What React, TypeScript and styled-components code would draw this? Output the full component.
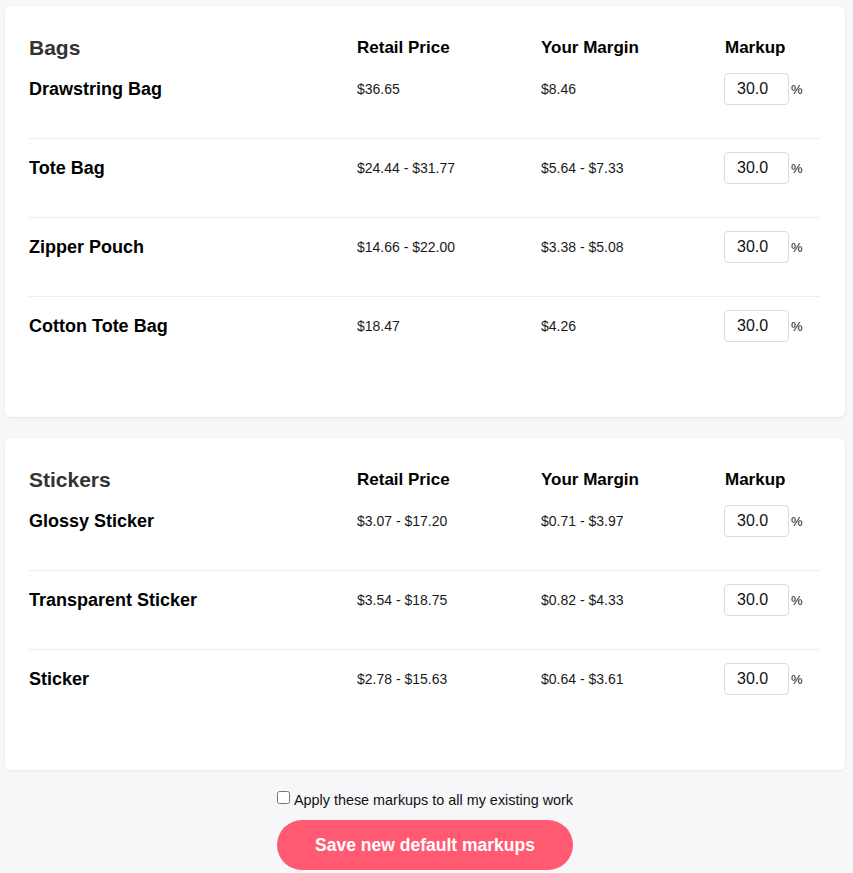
import React from 'react'
import styled, { createGlobalStyle } from 'styled-components'

type Product = {
  name: string
  retail: string
  margin: string
  markup: string
}

type Category = {
  title: string
  products: Product[]
}

const categories: Category[] = [
  {
    title: 'Bags',
    products: [
      { name: 'Drawstring Bag', retail: '$36.65', margin: '$8.46', markup: '30.0' },
      { name: 'Tote Bag', retail: '$24.44 - $31.77', margin: '$5.64 - $7.33', markup: '30.0' },
      { name: 'Zipper Pouch', retail: '$14.66 - $22.00', margin: '$3.38 - $5.08', markup: '30.0' },
      { name: 'Cotton Tote Bag', retail: '$18.47', margin: '$4.26', markup: '30.0' },
    ],
  },
  {
    title: 'Stickers',
    products: [
      { name: 'Glossy Sticker', retail: '$3.07 - $17.20', margin: '$0.71 - $3.97', markup: '30.0' },
      { name: 'Transparent Sticker', retail: '$3.54 - $18.75', margin: '$0.82 - $4.33', markup: '30.0' },
      { name: 'Sticker', retail: '$2.78 - $15.63', margin: '$0.64 - $3.61', markup: '30.0' },
    ],
  },
]

const GlobalStyle = createGlobalStyle`
  html, body {
    margin: 0;
    padding: 0;
    background: #f7f7f9;
    font-family: "Liberation Sans", Arial, sans-serif;
    color: #111;
  }
`

const App = () => {
  const [applyAll, setApplyAll] = React.useState(false)

  return (
    <>
      <GlobalStyle />
      <Page>
        {categories.map((category) => (
          <CategoryCard key={category.title} category={category} />
        ))}
        <Footer>
          <CheckboxLabel>
            <Checkbox
              type="checkbox"
              checked={applyAll}
              onChange={(e) => setApplyAll(e.target.checked)}
            />
            Apply these markups to all my existing work
          </CheckboxLabel>
          <SaveButton type="button">Save new default markups</SaveButton>
        </Footer>
      </Page>
    </>
  )
}

const CategoryCard = ({ category }: { category: Category }) => (
  <Card>
    <HeaderRow>
      <Title>{category.title}</Title>
      <ColumnHeading>Retail Price</ColumnHeading>
      <ColumnHeading>Your Margin</ColumnHeading>
      <ColumnHeading>Markup</ColumnHeading>
    </HeaderRow>
    {category.products.map((product) => (
      <ProductRow key={product.name}>
        <ProductName>{product.name}</ProductName>
        <Value>{product.retail}</Value>
        <Value>{product.margin}</Value>
        <MarkupCell>
          <MarkupInput defaultValue={product.markup} />
          <Percent>%</Percent>
        </MarkupCell>
      </ProductRow>
    ))}
  </Card>
)

const Page = styled.div`
  display: flex;
  flex-direction: column;
  gap: 21px;
  padding: 6px 8px 3px 5px;
`

const Card = styled.section`
  padding: 30px 25px 42px 24px;
  background: #fff;
  border-radius: 6px;
  box-shadow: 0 1px 3px rgba(0, 0, 0, 0.07);
`

const rowGrid = `
  display: grid;
  grid-template-columns: 328px 184px 184px 1fr;
  align-items: center;
`

const HeaderRow = styled.div`
  ${rowGrid}
  height: 24px;
`

const Title = styled.h2`
  margin: 0;
  font-size: 21px;
  font-weight: 700;
  line-height: 24px;
  color: #333;
`

const ColumnHeading = styled.span`
  font-size: 17px;
  font-weight: 700;
  color: #000;
`

const ProductRow = styled.div`
  ${rowGrid}
  padding: 13px 0 33px;
  border-bottom: 1px solid #eeeeee;

  &:last-child {
    border-bottom: 0;
  }
`

const ProductName = styled.span`
  font-size: 18px;
  font-weight: 700;
  color: #000;
`

const Value = styled.span`
  font-size: 14px;
  color: #1a1a1a;
`

const MarkupCell = styled.div`
  display: flex;
  align-items: center;
`

const MarkupInput = styled.input`
  box-sizing: border-box;
  width: 65px;
  height: 32px;
  margin-left: -1px;
  padding: 0 0 0 12px;
  border: 1px solid #dcdce0;
  border-radius: 4px;
  font-family: inherit;
  font-size: 16px;
  color: #111;
  background: #fff;
  outline: none;
`

const Percent = styled.span`
  margin-left: 2px;
  font-size: 13px;
  color: #111;
`

const Footer = styled.div`
  display: flex;
  flex-direction: column;
  align-items: center;
  gap: 12px;
`

const CheckboxLabel = styled.label`
  display: flex;
  align-items: center;
  font-size: 14.4px;
  color: #111;
`

const Checkbox = styled.input`
  width: 13px;
  height: 13px;
  margin: 0 4px 4px 0;
`

const SaveButton = styled.button`
  width: 296px;
  height: 50px;
  border: 0;
  border-radius: 25px;
  background: #ff5a72;
  color: #fff;
  font-family: inherit;
  font-size: 17.5px;
  font-weight: 700;
  cursor: pointer;
`

export default App
